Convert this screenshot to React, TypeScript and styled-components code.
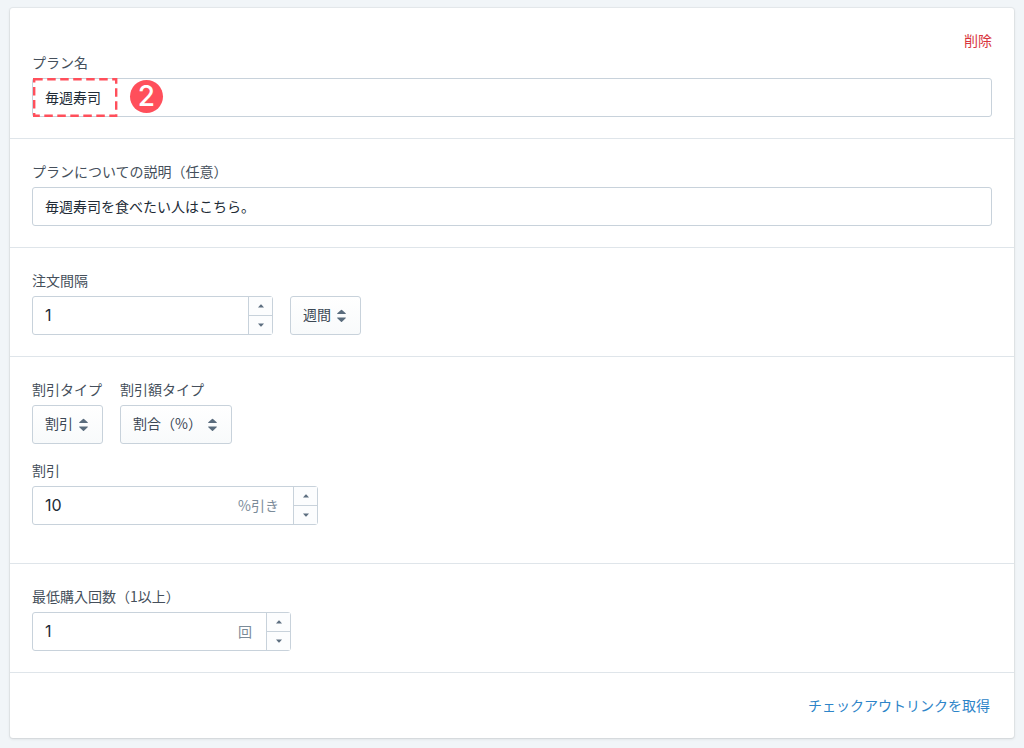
import React, { useState } from "react";
import styled, { createGlobalStyle } from "styled-components";

const GlobalStyle = createGlobalStyle`
  *, *::before, *::after { box-sizing: border-box; }
  body {
    margin: 0;
    background: #f1f5f8;
    color: #212b36;
    font-family: "Noto Sans CJK JP", sans-serif;
    font-size: 14px;
    line-height: 20px;
  }
  button, input, select { font: inherit; color: inherit; }
`;

const Page = styled.main`
  padding: 8px 10px 9px;
`;

const Card = styled.form`
  background: #fff;
  border-radius: 3px;
  box-shadow: 0 0 0 1px rgba(63, 63, 68, 0.05), 0 1px 3px rgba(63, 63, 68, 0.15);
`;

const Section = styled.section<{ $bottom?: number }>`
  padding: 22px 22px ${(p) => p.$bottom ?? 21}px;

  & + & {
    border-top: 1px solid #dfe5ea;
  }
`;

const Row = styled.div<{ $end?: boolean }>`
  display: flex;
  align-items: flex-end;
  justify-content: ${(p) => (p.$end ? "flex-end" : "flex-start")};
  gap: 17px;

  & + & {
    margin-top: 16px;
  }
`;

const Field = styled.div`
  display: flex;
  flex-direction: column;
  gap: 6px;
`;

const Label = styled.label`
  color: #454f5b;
`;

const DeleteButton = styled.button`
  padding: 0;
  margin-bottom: 2px;
  border: 0;
  background: none;
  color: #d9363e;
  cursor: pointer;
`;

const GetLink = styled.a`
  padding-right: 2px;
  color: #2d84c8;
  text-decoration: none;
`;

const InputBox = styled.div<{ $width?: number }>`
  position: relative;
  display: flex;
  width: ${(p) => (p.$width ? `${p.$width}px` : "100%")};
  height: 39px;
  border: 1px solid #c8d2db;
  border-radius: 3px;
  background: #fff;
`;

const TextInput = styled.input`
  flex: 1;
  min-width: 0;
  padding: 0 12px 2px;
  border: 0;
  outline: 0;
  background: none;
`;

const NumberInput = styled(TextInput)`
  font-family: Inter, sans-serif;
  font-size: 16px;
  appearance: textfield;
  -moz-appearance: textfield;

  &::-webkit-inner-spin-button,
  &::-webkit-outer-spin-button {
    appearance: none;
    margin: 0;
  }
`;

const Suffix = styled.span`
  align-self: center;
  padding: 0 14px 2px 0;
  color: #7b8b99;
`;

const Spinner = styled.div`
  display: flex;
  flex-direction: column;
  width: 24px;
  border-left: 1px solid #c8d2db;
`;

const SpinButton = styled.button`
  display: flex;
  flex: 1;
  align-items: center;
  justify-content: center;
  padding: 0;
  border: 0;
  background: #fcfdfe;
  color: #5d6f80;
  cursor: pointer;

  & + & {
    border-top: 1px solid #c8d2db;
  }
`;

const SelectBox = styled.div`
  display: grid;
  align-items: center;
  height: 39px;
  border: 1px solid #c8d2db;
  border-radius: 3px;
  background: linear-gradient(#fff, #f8fafb);

  & > * {
    grid-area: 1 / 1;
  }

  & > svg {
    justify-self: end;
    margin-right: 14px;
    pointer-events: none;
  }
`;

const Select = styled.select<{ $width: number }>`
  width: ${(p) => p.$width}px;
  height: 37px;
  padding: 0 0 3px 12px;
  border: 0;
  outline: 0;
  appearance: none;
  background: none;
  color: #3b4754;
`;

const Highlight = styled.svg`
  position: absolute;
  top: -1px;
  left: 0;
  width: 85px;
  height: 39px;
  pointer-events: none;
`;

const StepBadge = styled.span`
  position: absolute;
  top: 1px;
  left: 97px;
  width: 33px;
  height: 33px;
  border-radius: 50%;
  background: #ff4f5b;
  color: #fff;
  font-family: Inter, sans-serif;
  font-size: 28px;
  font-weight: 500;
  line-height: 33px;
  text-align: center;
  pointer-events: none;
`;

interface NumberFieldProps {
  id: string;
  label: string;
  initial: number;
  width: number;
  suffix?: string;
}

function NumberField({ id, label, initial, width, suffix }: NumberFieldProps) {
  const [value, setValue] = useState(initial);
  return (
    <Field>
      <Label htmlFor={id}>{label}</Label>
      <InputBox $width={width}>
        <NumberInput
          id={id}
          type="number"
          value={value}
          onChange={(e) => setValue(Number(e.target.value))}
        />
        {suffix && <Suffix>{suffix}</Suffix>}
        <Spinner>
          <SpinButton type="button" aria-label="増やす" onClick={() => setValue(value + 1)}>
            <svg width="6" height="4" viewBox="0 0 6 4">
              <path d="M0 3.6 2.6.5h.8L6 3.6z" fill="currentColor" />
            </svg>
          </SpinButton>
          <SpinButton type="button" aria-label="減らす" onClick={() => setValue(value - 1)}>
            <svg width="6" height="4" viewBox="0 0 6 4">
              <path d="M0 .4 2.6 3.5h.8L6 .4z" fill="currentColor" />
            </svg>
          </SpinButton>
        </Spinner>
      </InputBox>
    </Field>
  );
}

interface SelectControlProps {
  id: string;
  option: string;
  width: number;
  ariaLabel?: string;
}

function SelectControl({ id, option, width, ariaLabel }: SelectControlProps) {
  return (
    <SelectBox>
      <Select id={id} $width={width} aria-label={ariaLabel}>
        <option>{option}</option>
      </Select>
      <svg width="9" height="14" viewBox="0 0 9 14" fill="#5a6c7d">
        <path d="M.6 5h7.8c.4 0 .6-.4.3-.7L5 .9a.7.7 0 0 0-1 0L.3 4.3c-.3.3-.1.7.3.7z" />
        <path d="M.6 8.6h7.8c.4 0 .6.4.3.7L5 12.7a.7.7 0 0 1-1 0L.3 9.3c-.3-.3-.1-.7.3-.7z" />
      </svg>
    </SelectBox>
  );
}

export default function App() {
  return (
    <>
      <GlobalStyle />
      <Page>
        <Card onSubmit={(e) => e.preventDefault()}>
          <Section>
            <Row $end>
              <DeleteButton type="button">削除</DeleteButton>
            </Row>
            <Field>
              <Label htmlFor="plan-name">プラン名</Label>
              <InputBox>
                <TextInput id="plan-name" defaultValue="毎週寿司" />
                <Highlight viewBox="0 0 85 39" aria-hidden="true">
                  <rect
                    x="1.2"
                    y="1.2"
                    width="82"
                    height="36.6"
                    fill="none"
                    stroke="#ff4f5b"
                    strokeWidth="2.4"
                    strokeDasharray="8.5 4.5"
                  />
                </Highlight>
                <StepBadge>2</StepBadge>
              </InputBox>
            </Field>
          </Section>

          <Section>
            <Field>
              <Label htmlFor="plan-description">プランについての説明（任意）</Label>
              <InputBox>
                <TextInput id="plan-description" defaultValue="毎週寿司を食べたい人はこちら。" />
              </InputBox>
            </Field>
          </Section>

          <Section>
            <Row>
              <NumberField id="interval" label="注文間隔" initial={1} width={241} />
              <SelectControl id="interval-unit" option="週間" width={69} ariaLabel="間隔の単位" />
            </Row>
          </Section>

          <Section $bottom={38}>
            <Row>
              <Field>
                <Label htmlFor="discount-type">割引タイプ</Label>
                <SelectControl id="discount-type" option="割引" width={69} />
              </Field>
              <Field>
                <Label htmlFor="amount-type">割引額タイプ</Label>
                <SelectControl id="amount-type" option="割合（%）" width={110} />
              </Field>
            </Row>
            <Row>
              <NumberField id="discount" label="割引" initial={10} width={286} suffix="%引き" />
            </Row>
          </Section>

          <Section>
            <NumberField
              id="minimum"
              label="最低購入回数（1以上）"
              initial={1}
              width={259}
              suffix="回"
            />
          </Section>

          <Section $bottom={23}>
            <Row $end>
              <GetLink href="#checkout">チェックアウトリンクを取得</GetLink>
            </Row>
          </Section>
        </Card>
      </Page>
    </>
  );
}
